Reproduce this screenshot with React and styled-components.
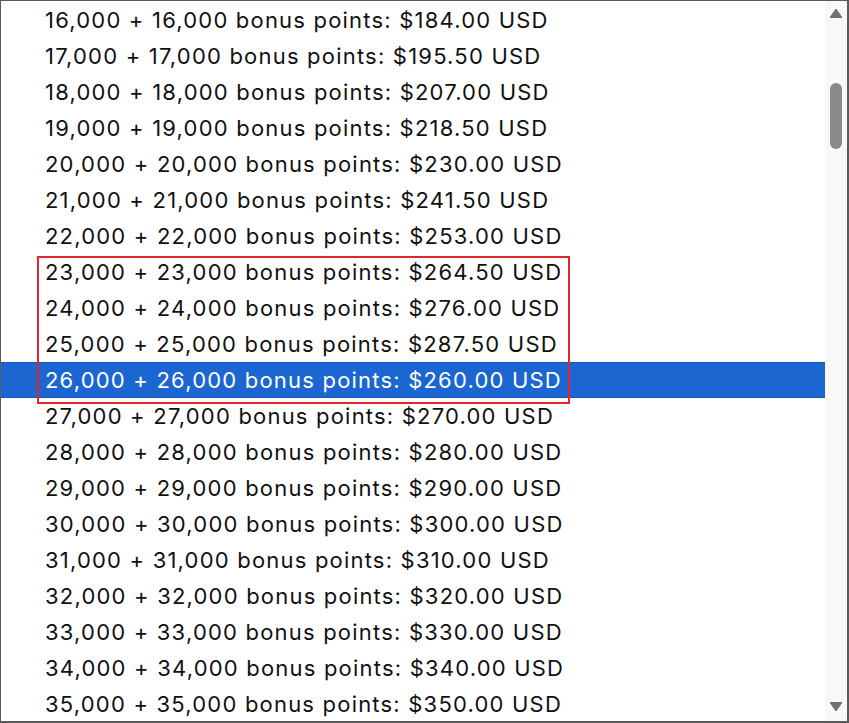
import React from "react"
import styled, { createGlobalStyle } from "styled-components"

const Global = createGlobalStyle`
  html, body {
    margin: 0;
    padding: 0;
    background: #ffffff;
  }
`

const Frame = styled.div`
  position: relative;
  width: 849px;
  height: 723px;
  box-sizing: border-box;
  border: 1px solid #5a5a5a;
  border-right-width: 2px;
  border-bottom-width: 2px;
  display: flex;
  overflow: hidden;
  background: #ffffff;
`

const List = styled.ul`
  flex: 1;
  margin: 0;
  padding: 1px 0 0;
  list-style: none;
  overflow: hidden;
`

const Option = styled.li`
  height: 36px;
  box-sizing: border-box;
  padding-left: 44px;
  display: flex;
  align-items: center;
  font-family: Inter, "Noto Sans", sans-serif;
  font-size: 22px;
  letter-spacing: 1.2px;
  color: ${(p) => (p.$selected ? "#ffffff" : "#111111")};
  background: ${(p) => (p.$selected ? "#1b66d1" : "transparent")};
  border-top: 1px solid ${(p) => (p.$selected ? "#1456b8" : "transparent")};
  border-bottom: 1px solid ${(p) => (p.$selected ? "#1456b8" : "transparent")};
  white-space: nowrap;
`

const Scrollbar = styled.div`
  width: 22px;
  background: #f8f8f8;
  display: flex;
  flex-direction: column;
  align-items: center;
  padding: 7px 0 9px;
  box-sizing: border-box;
`

const Thumb = styled.div`
  width: 12px;
  height: 66px;
  border-radius: 6px;
  background: #8a8a8a;
  margin-top: 64px;
`

const Spacer = styled.div`
  flex: 1;
`

const Callout = styled.div`
  position: absolute;
  left: 36px;
  top: 255px;
  width: 533px;
  height: 148px;
  box-sizing: border-box;
  border: 2px solid #e3262b;
  pointer-events: none;
`

const Arrow = ({ down }) => (
  <svg width="14" height="11" viewBox="0 0 14 11">
    <path
      d={down ? "M1 1.5 L13 1.5 L7 10 Z" : "M7 1 L13 9.5 L1 9.5 Z"}
      fill="#707070"
      stroke="#707070"
      strokeWidth="1"
      strokeLinejoin="round"
    />
  </svg>
)

const money = (n) =>
  "$" + n.toFixed(2).replace(/\B(?=(\d{3})+(?!\d))/g, ",")

const rows = Array.from({ length: 20 }, (_, i) => {
  const k = 16 + i
  const pts = `${k},000`
  const price = k <= 25 ? k * 11.5 : k * 10
  return { key: k, label: `${pts} + ${pts} bonus points: ${money(price)} USD` }
})

const App = () => {
  return (
    <>
      <Global />
      <Frame>
        <List>
          {rows.map((r) => (
            <Option key={r.key} $selected={r.key === 26}>
              {r.label}
            </Option>
          ))}
        </List>
        <Scrollbar>
          <Arrow />
          <Thumb />
          <Spacer />
          <Arrow down />
        </Scrollbar>
        <Callout />
      </Frame>
    </>
  )
}

export default App
